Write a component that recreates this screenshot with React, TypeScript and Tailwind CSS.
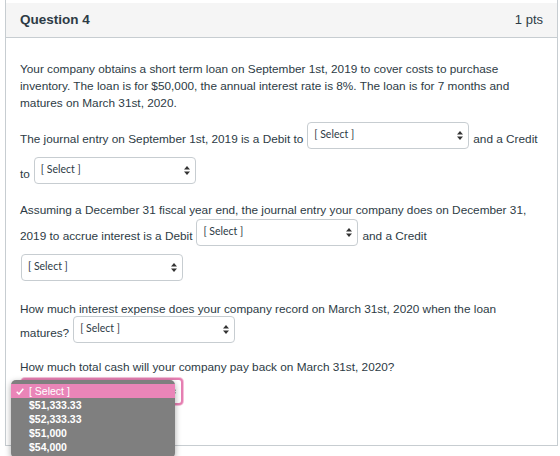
import React from 'react';

const options = ['$51,333.33', '$52,333.33', '$51,000', '$54,000'];

function Arrows() {
  return (
    <svg width="6" height="9" viewBox="0 0 6 9" className="shrink-0">
      <polygon points="0,3.6 3,0 6,3.6" fill="#333" />
      <polygon points="0,5.4 3,9 6,5.4" fill="#333" />
    </svg>
  );
}

function SelectBox({ first, focused }: { first?: boolean; focused?: boolean }) {
  return (
    <span
      className={
        'inline-flex items-center justify-between w-[162px] h-[27px] pl-[6px] pr-[5px] bg-white rounded-[4px] text-[10.5px] text-[#2d3b45] font-["Lato",sans-serif] shrink-0 ' +
        (first ? 'ml-[1px] mr-[4px] ' : 'mx-[4px] ') +
        (focused
          ? 'border-2 border-[#e57fb2] shadow-[0_0_0_1px_#f5c1da]'
          : 'border border-[#c7cdd1]')
      }
    >
      <span className="pb-[2px]">[ Select ]</span>
      <Arrows />
    </span>
  );
}

function Dropdown() {
  return (
    <div className="absolute left-[-9px] top-[2px] w-[164px] pt-[4px] pb-[4px] bg-[#7f7f7f] rounded-[5px] shadow-[0_2px_6px_rgba(0,0,0,0.35)] font-['Liberation_Sans',Arial,sans-serif] text-[10.5px] font-bold text-white">
      <div className="flex items-center h-[14px] bg-[#ea85b8]">
        <span className="w-[18px] flex justify-center">
          <svg width="8" height="7" viewBox="0 0 8 7">
            <polyline points="0.7,3.8 3,6 7.3,0.8" fill="none" stroke="white" strokeWidth="1.5" />
          </svg>
        </span>
        <span className="font-normal">[ Select ]</span>
      </div>
      {options.map((o) => (
        <div key={o} className="h-[14px] leading-[15px] pl-[18px]">
          {o}
        </div>
      ))}
    </div>
  );
}

function Row({ children, className = '' }: { children: React.ReactNode; className?: string }) {
  return <div className={'flex items-center h-[27px] whitespace-nowrap ' + className}>{children}</div>;
}

function T({ children }: { children: React.ReactNode }) {
  return <span className="pt-[8px]">{children}</span>;
}

export default function App() {
  return (
    <div className="w-[560px] h-[456px] overflow-hidden bg-white font-['Liberation_Sans',Arial,sans-serif] text-[#2d3b45]">
      <div className="ml-[5px] w-[553px] h-[446px] pt-[3px] border-x border-b border-[#c7cdd1]">
        <div className="flex items-center justify-between h-[35px] pl-[14px] pr-[14px] bg-[#f5f5f5] border-b border-[#c7cdd1]">
          <span className="text-[13.5px] font-bold">Question 4</span>
          <span className="text-[13px]">1 pts</span>
        </div>

        <div className="px-[14px] pt-[23px] text-[11.8px] leading-[17px]">
          <div className="whitespace-nowrap">
            Your company obtains a short term loan on September 1st, 2019 to cover costs to purchase
            <br />
            inventory. The loan is for $50,000, the annual interest rate is 8%. The loan is for 7 months and
            <br />
            matures on March 31st, 2020.
          </div>

          <Row className="mt-[10px]">
            <T>The journal entry on September 1st, 2019 is a Debit to</T>
            <SelectBox />
            <T>and a Credit</T>
          </Row>
          <Row className="mt-[8px]">
            <T>to</T>
            <SelectBox />
          </Row>

          <div className="mt-[18px] whitespace-nowrap">
            Assuming a December 31 fiscal year end, the journal entry your company does on December 31,
          </div>
          <Row>
            <T>2019 to accrue interest is a Debit</T>
            <SelectBox />
            <T>and a Credit</T>
          </Row>
          <Row className="mt-[8px]">
            <SelectBox first />
          </Row>

          <div className="mt-[20px] whitespace-nowrap">
            How much interest expense does your company record on March 31st, 2020 when the loan
          </div>
          <Row className="mt-[-2px]">
            <T>matures?</T>
            <SelectBox />
          </Row>

          <div className="mt-[16px] whitespace-nowrap">
            How much total cash will your company pay back on March 31st, 2020?
          </div>
          <Row className="mt-[2px]">
            <span className="relative">
              <SelectBox first focused />
              <Dropdown />
            </span>
          </Row>
        </div>
      </div>
    </div>
  );
}
